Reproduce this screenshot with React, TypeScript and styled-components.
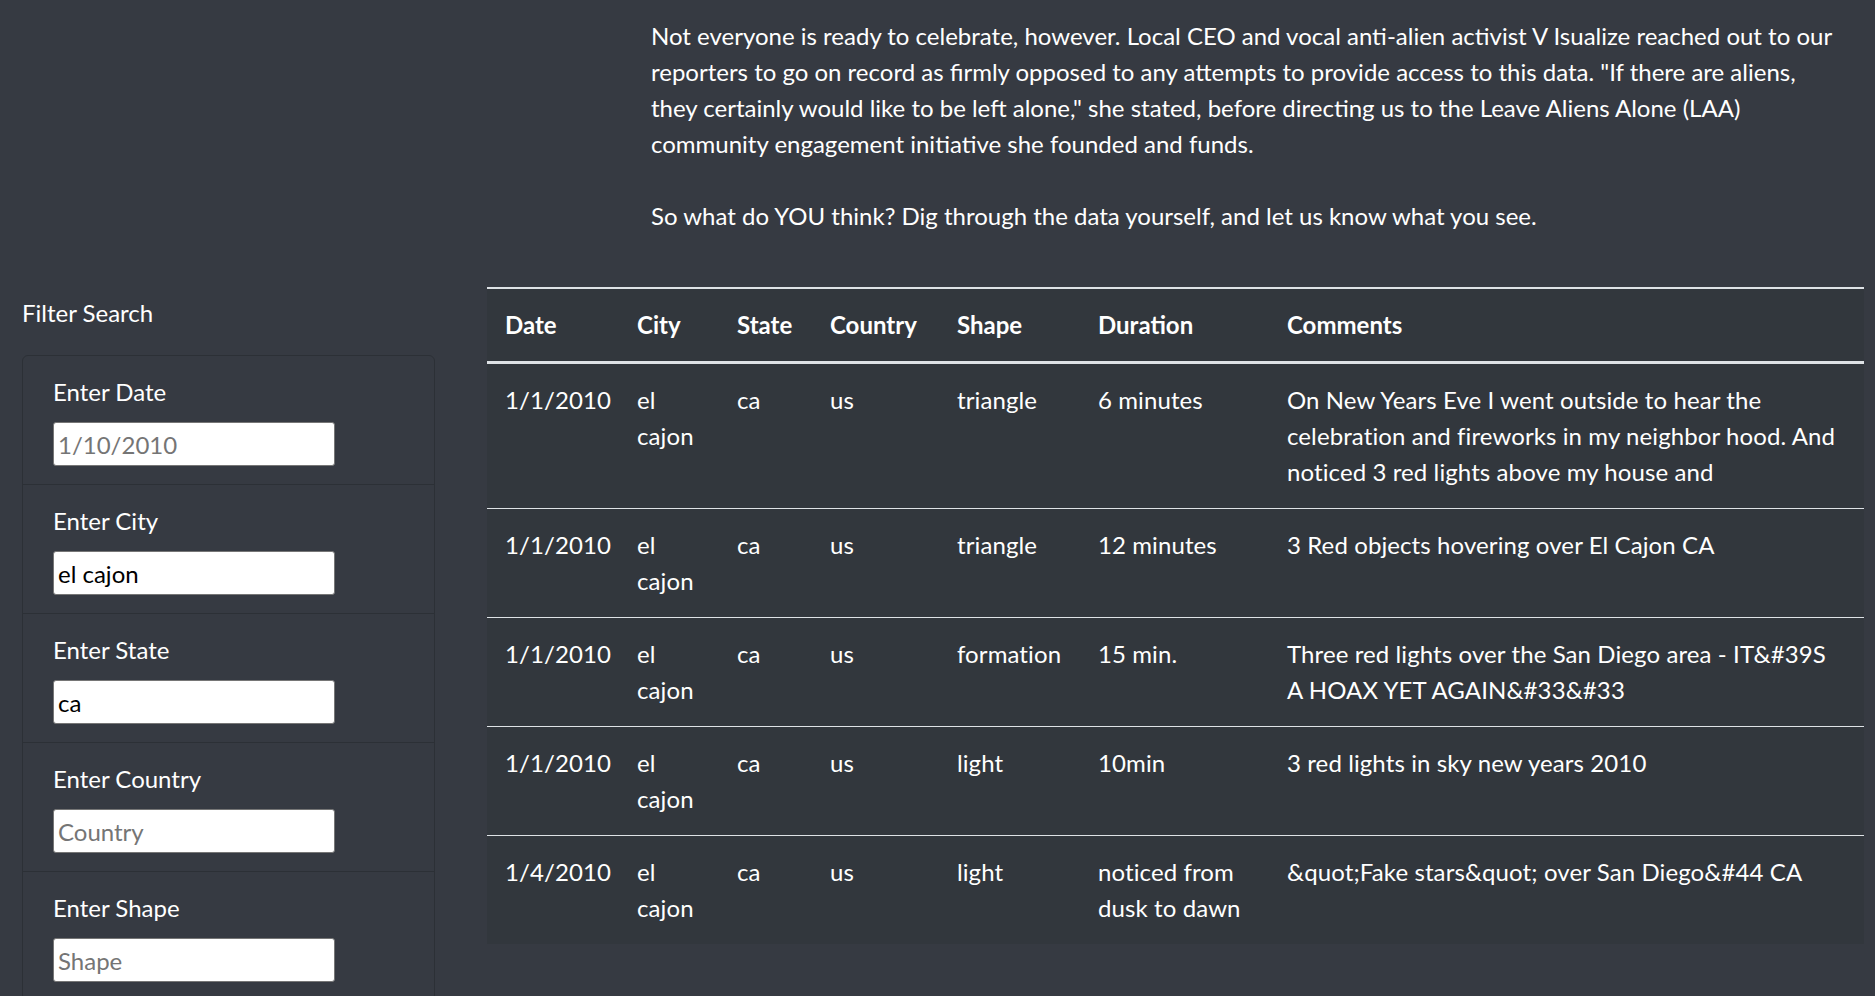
import React from "react";
import styled, { createGlobalStyle } from "styled-components";

const Global = createGlobalStyle`
  html, body {
    margin: 0;
    padding: 0;
    background: #363a42;
  }
  body {
    font-family: "Segoe UI", Lato, "Noto Sans", sans-serif;
    font-size: 24px;
    line-height: 36px;
    color: #ffffff;
  }
  * { box-sizing: border-box; }
`;

const Page = styled.div`
  display: flex;
  flex-direction: column;
`;

const Intro = styled.section`
  padding: 18px 33px 0 651px;
`;

const Para = styled.p<{ $gap?: number }>`
  margin: 0 0 ${(p) => p.$gap ?? 0}px 0;
`;

const Row = styled.div`
  display: flex;
  align-items: flex-start;
  margin-top: 53px;
`;

const Sidebar = styled.aside`
  width: 487px;
  flex: 0 0 487px;
  padding: 8px 52px 0 22px;
`;

const SideTitle = styled.h5`
  margin: 0 0 24px 0;
  font-size: 24px;
  line-height: 36px;
  font-weight: 400;
`;

const FilterList = styled.ul`
  list-style: none;
  margin: 0;
  padding: 0;
  border: 1px solid #2c3036;
  border-radius: 6px;
  overflow: hidden;
`;

const FilterItem = styled.li`
  padding: 18px 30px;
  border-top: 1px solid #2c3036;
  &:first-child { border-top: none; }
  display: flex;
  flex-direction: column;
  align-items: flex-start;
`;

const Label = styled.label`
  display: block;
  margin-bottom: 12px;
  line-height: 36px;
`;

const Input = styled.input`
  width: 282px;
  height: 44px;
  padding: 0 4px;
  border: 1px solid #767676;
  border-radius: 3px;
  background: #ffffff;
  color: #000000;
  font-family: inherit;
  font-size: 24px;
  &::placeholder { color: #757575; opacity: 1; }
  &:focus { outline: none; }
`;

const TableWrap = styled.div`
  width: 1377px;
  flex: 0 0 1377px;
`;

const Table = styled.table`
  width: 1377px;
  table-layout: fixed;
  border-collapse: collapse;
  background: #32373d;
  color: #ffffff;
`;

const Th = styled.th<{ $w?: number }>`
  width: ${(p) => (p.$w ? `${p.$w}px` : "auto")};
  text-align: left;
  font-weight: 700;
  padding: 18px;
  line-height: 36px;
  vertical-align: bottom;
  border-top: 2px solid #dee2e6;
  border-bottom: 3px solid #dee2e6;
`;

const Td = styled.td`
  padding: 18px;
  line-height: 36px;
  vertical-align: top;
  letter-spacing: 0.1px;
  border-top: 1px solid #dee2e6;
  &:last-child { padding-right: 22px; }
`;

const rows = [
  ["1/1/2010", "el cajon", "ca", "us", "triangle", "6 minutes", "On New Years Eve I went outside to hear the celebration and fireworks in my neighbor hood. And noticed 3 red lights above my house and"],
  ["1/1/2010", "el cajon", "ca", "us", "triangle", "12 minutes", "3 Red objects hovering over El Cajon CA"],
  ["1/1/2010", "el cajon", "ca", "us", "formation", "15 min.", "Three red lights over the San Diego area - IT&#39S A HOAX YET AGAIN&#33&#33"],
  ["1/1/2010", "el cajon", "ca", "us", "light", "10min", "3 red lights in sky new years 2010"],
  ["1/4/2010", "el cajon", "ca", "us", "light", "noticed from dusk to dawn", "&quot;Fake stars&quot; over San Diego&#44 CA"],
];

const headers: [string, number?][] = [
  ["Date", 132],
  ["City", 100],
  ["State", 93],
  ["Country", 127],
  ["Shape", 141],
  ["Duration", 189],
  ["Comments"],
];

const filters = [
  { label: "Enter Date", placeholder: "1/10/2010", value: "" },
  { label: "Enter City", placeholder: "City", value: "el cajon" },
  { label: "Enter State", placeholder: "State", value: "ca" },
  { label: "Enter Country", placeholder: "Country", value: "" },
  { label: "Enter Shape", placeholder: "Shape", value: "" },
];

export default function App() {
  return (
    <>
      <Global />
      <Page>
        <Intro>
          <Para $gap={36}>
            Not everyone is ready to celebrate, however. Local CEO and vocal anti-alien activist V Isualize reached out to our reporters to go on record as firmly opposed to any attempts to provide access to this data. "If there are aliens, they certainly would like to be left alone," she stated, before directing us to the Leave Aliens Alone (LAA) community engagement initiative she founded and funds.
          </Para>
          <Para>So what do YOU think? Dig through the data yourself, and let us know what you see.</Para>
        </Intro>
        <Row>
          <Sidebar>
            <SideTitle>Filter Search</SideTitle>
            <FilterList>
              {filters.map((f) => (
                <FilterItem key={f.label}>
                  <Label>{f.label}</Label>
                  <Input type="text" placeholder={f.placeholder} defaultValue={f.value} />
                </FilterItem>
              ))}
            </FilterList>
          </Sidebar>
          <TableWrap>
            <Table>
              <thead>
                <tr>
                  {headers.map(([h, w]) => (
                    <Th key={h} $w={w}>{h}</Th>
                  ))}
                </tr>
              </thead>
              <tbody>
                {rows.map((r, i) => (
                  <tr key={i}>
                    {r.map((c, j) => (
                      <Td key={j}>{c}</Td>
                    ))}
                  </tr>
                ))}
              </tbody>
            </Table>
          </TableWrap>
        </Row>
      </Page>
    </>
  );
}
